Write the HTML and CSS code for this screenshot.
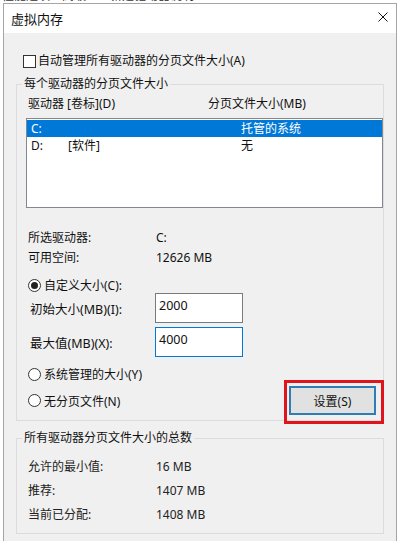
FILE: index.html
```html
<!DOCTYPE html>
<html lang="zh-CN">
<head>
    <meta charset="UTF-8">
    <meta name="viewport" content="width=device-width, initial-scale=1.0">
    <title>虚拟内存</title>
    <link rel="stylesheet" href="styles.css">
</head>
<body>
    <div class="back-strip"><span>性能选项　高级　　新建驱动器说明</span></div>

    <div class="dialog">
        <div class="titlebar">
            <span class="title">虚拟内存</span>
            <svg class="close" width="10" height="10" viewBox="0 0 10 10">
                <path d="M0.5 0.5 L9.5 9.5 M9.5 0.5 L0.5 9.5" stroke="#111" stroke-width="1" fill="none"/>
            </svg>
        </div>

        <div class="content">
            <label class="check-row">
                <span class="checkbox"></span>
                <span>自动管理所有驱动器的分页文件大小(A)</span>
            </label>

            <fieldset class="group group-drives">
                <legend>每个驱动器的分页文件大小</legend>

                <div class="list-head">
                    <span class="head-drive">驱动器 [卷标](D)</span>
                    <span>分页文件大小(MB)</span>
                </div>

                <div class="listbox">
                    <div class="list-row selected">
                        <span class="col-letter">C:</span>
                        <span class="col-label"></span>
                        <span>托管的系统</span>
                    </div>
                    <div class="list-row">
                        <span class="col-letter">D:</span>
                        <span class="col-label">[软件]</span>
                        <span>无</span>
                    </div>
                </div>

                <div class="info">
                    <div class="info-row"><span class="info-label">所选驱动器:</span><span>C:</span></div>
                    <div class="info-row"><span class="info-label">可用空间:</span><span>12626 MB</span></div>
                </div>

                <div class="radio-row custom">
                    <span class="radio checked"></span>
                    <span>自定义大小(C):</span>
                </div>

                <div class="size-row">
                    <span class="size-label">初始大小(MB)(I):</span>
                    <input class="size-input" type="text" value="2000">
                </div>
                <div class="size-row second">
                    <span class="size-label">最大值(MB)(X):</span>
                    <input class="size-input focused" type="text" value="4000">
                </div>

                <div class="radio-row system">
                    <span class="radio"></span>
                    <span>系统管理的大小(Y)</span>
                </div>

                <div class="set-row">
                    <div class="radio-row">
                        <span class="radio"></span>
                        <span>无分页文件(N)</span>
                    </div>
                    <button class="set-btn marked">设置(S)</button>
                </div>
            </fieldset>

            <fieldset class="group group-total">
                <legend>所有驱动器分页文件大小的总数</legend>
                <div class="total">
                    <div class="total-row"><span class="info-label">允许的最小值:</span><span>16 MB</span></div>
                    <div class="total-row"><span class="info-label">推荐:</span><span>1407 MB</span></div>
                    <div class="total-row"><span class="info-label">当前已分配:</span><span>1408 MB</span></div>
                </div>
            </fieldset>
        </div>
    </div>
</body>
</html>
```

FILE: styles.css
```css
* {
    box-sizing: border-box;
}

body {
    margin: 0;
    width: 399px;
    height: 541px;
    overflow: hidden;
    background: #fff;
    font-family: "Noto Sans", "Noto Sans CJK SC", sans-serif;
    font-size: 12px;
    color: #111;
}

.back-strip {
    height: 3px;
    overflow: hidden;
    white-space: nowrap;
    padding-left: 2px;
}

.back-strip span {
    display: block;
    margin-top: -10px;
    line-height: 12px;
    color: #333;
}

.dialog {
    margin-left: 3px;
    width: 394px;
    height: 538px;
    border: 1px solid #a5a5a5;
    border-bottom: none;
    background: #f0f0f0;
}

.titlebar {
    height: 29px;
    background: #fff;
    display: flex;
    align-items: center;
    justify-content: space-between;
    padding: 0 8px 0 7px;
}

.title {
    font-size: 13px;
    line-height: 16px;
}

.close {
    display: block;
    margin-bottom: 3px;
}

.content {
    padding: 20px 12px 0 12px;
}

.check-row {
    display: flex;
    align-items: center;
    gap: 2px;
    line-height: 16px;
}

.checkbox {
    width: 13px;
    height: 13px;
    margin-left: 7px;
    border: 1px solid #333;
    background: #fff;
}

.group {
    margin: 0;
    padding: 0 0 5px 0;
    min-width: 0;
    border: 1px solid #dcdcdc;
}

.group legend {
    margin-left: 5px;
    padding: 0 2px;
    line-height: 16px;
}

.group-drives {
    margin-top: 7px;
}

.list-head {
    display: flex;
    margin-top: 4px;
    padding-left: 11px;
    line-height: 16px;
}

.head-drive {
    width: 180px;
}

.listbox {
    margin: 6px 0 0 9px;
    width: 357px;
    height: 90px;
    padding-top: 1px;
    border: 1px solid #828790;
    background: #fff;
}

.list-row {
    display: flex;
    height: 17px;
    line-height: 17px;
    padding-left: 4px;
}

.list-row.selected {
    background: #0078d7;
    color: #fff;
}

.col-letter {
    width: 37px;
}

.col-label {
    width: 173px;
}

.info {
    margin-top: 20px;
}

.info-row {
    display: flex;
    height: 20px;
    line-height: 20px;
    padding-left: 11px;
}

.info-label {
    width: 128px;
}

.radio-row {
    display: flex;
    align-items: center;
    gap: 3px;
    padding-left: 11px;
    height: 20px;
}

.radio-row.custom {
    margin-top: 9px;
    height: 16px;
}

.radio-row.system {
    margin-top: 7px;
}

.radio {
    width: 13px;
    height: 13px;
    border: 1px solid #333;
    border-radius: 50%;
    background: #fff;
    display: flex;
    align-items: center;
    justify-content: center;
}

.radio.checked::before {
    content: "";
    width: 7px;
    height: 7px;
    border-radius: 50%;
    background: #222;
}

.size-row {
    display: flex;
    align-items: center;
    padding-left: 13px;
}

.size-row.second {
    margin-top: 4px;
}

.size-label {
    width: 125px;
    font-size: 12.5px;
}

.size-input {
    width: 88px;
    height: 30px;
    margin: 0;
    padding: 0 3px 6px 3px;
    border: 1px solid #7a7a7a;
    background: #fff;
    font-family: inherit;
    font-size: 12.5px;
    color: #111;
    outline: none;
}

.size-input.focused {
    border-color: #0078d7;
}

.set-row {
    display: flex;
    align-items: center;
    justify-content: space-between;
    margin-top: 2px;
    padding-right: 7px;
}

.set-btn {
    position: relative;
    width: 87px;
    height: 29px;
    margin: 0;
    padding: 0;
    border: 2px solid #2f7db5;
    background: #e1e1e1;
    font-family: inherit;
    font-size: 12px;
    color: #111;
}

/* red annotation frame drawn over the button */
.set-btn.marked::after {
    content: "";
    position: absolute;
    top: -8px;
    left: -7px;
    right: -10px;
    bottom: -11px;
    border: 3px solid #e0141c;
}

.group-total {
    margin-top: 9px;
    padding-bottom: 6px;
}

.total {
    margin-top: 9px;
}

.total-row {
    display: flex;
    height: 24px;
    line-height: 24px;
    padding-left: 11px;
    color: #222;
}
```
